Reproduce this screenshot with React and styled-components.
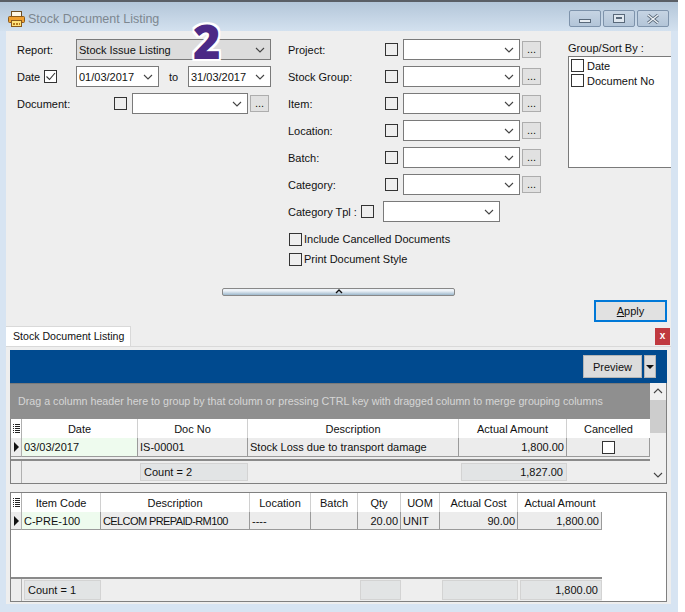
import React from "react";
import styled, { createGlobalStyle } from "styled-components";

const GlobalStyle = createGlobalStyle`
  html, body { margin: 0; padding: 0; background: #fff; }
  body { font-family: "Liberation Sans", Tahoma, sans-serif; font-size: 11px; color: #111; }
`;

const Chevron = () => (
  <svg width="10" height="6" viewBox="0 0 10 6">
    <polyline points="1,1 5,5 9,1" fill="none" stroke="#444" strokeWidth="1.1" />
  </svg>
);

const Tick = () => (
  <svg width="11" height="11" viewBox="0 0 11 11">
    <polyline points="1.5,5.5 4.5,8.5 10,2" fill="none" stroke="#333" strokeWidth="1.1" />
  </svg>
);

const PrinterIcon = () => (
  <svg width="17" height="16" viewBox="0 0 17 16">
    <rect x="3.5" y="0.5" width="10" height="6" fill="#fff8e6" stroke="#6f4e22" />
    <rect x="0.5" y="5.5" width="16" height="6" rx="1" fill="#f0a030" stroke="#8a5a1c" />
    <rect x="3.5" y="9.5" width="10" height="6" fill="#ffe27a" stroke="#8a5a1c" />
    <rect x="5" y="12" width="2" height="2" fill="#b5791f" />
    <rect x="8" y="12" width="2" height="2" fill="#b5791f" />
    <rect x="11" y="12" width="1" height="2" fill="#b5791f" />
  </svg>
);

const Page = styled.div`
  width: 685px;
  height: 612px;
  background: #fff;
  overflow: hidden;
  position: relative;
`;

const Win = styled.div`
  width: 678px;
  height: 612px;
  background: #d7e4f2;
  border-top: 2px solid #5a5f66;
  box-sizing: border-box;
  display: flex;
  flex-direction: column;
`;

const TitleBar = styled.div`
  height: 29px;
  flex: none;
  background: linear-gradient(#b3c6d9, #d3e1ef);
  display: flex;
  align-items: center;
  padding: 5px 9px 0 8px;
  box-sizing: border-box;
`;

const TitleText = styled.span`
  margin-left: 3px;
  font-size: 12.5px;
  color: #7d8790;
  flex: 1;
`;

const WinButtons = styled.div`
  display: flex;
  gap: 2px;
  margin-top: -1px;
`;

const WinButton = styled.div`
  width: 32px;
  height: 17px;
  box-sizing: border-box;
  border: 1px solid #7e93ab;
  border-radius: 2px;
  background: linear-gradient(#c6d4e3, #b3c5d8);
  display: flex;
  align-items: ${(p) => (p.$low ? "flex-end" : "center")};
  padding-bottom: ${(p) => (p.$low ? 3 : 0)}px;
  justify-content: center;
`;

const Client = styled.div`
  margin: 0 6px 0 6px;
  width: 665px;
  height: 573px;
  flex: none;
  background: #eeeeee;
  display: flex;
  flex-direction: column;
  overflow: hidden;
`;

const Badge = styled.div`
  position: absolute;
  left: 193px;
  top: 21px;
  font-family: "Open Sans", sans-serif;
  font-weight: 800;
  font-size: 47px;
  line-height: 40px;
  color: #4b2a86;
  text-shadow: -2px 0 #fff, 2px 0 #fff, 0 -2px #fff, 0 2px #fff, -2px -2px #fff, 2px 2px #fff, -2px 2px #fff, 2px -2px #fff;
`;

const FormArea = styled.div`
  display: grid;
  grid-template-columns: 271px 280px 1fr;
  padding: 8px 0 0 11px;
  height: 229px;
  box-sizing: border-box;
`;

const Column = styled.div`
  display: flex;
  flex-direction: column;
  gap: 6px;
`;

const Row = styled.div`
  display: flex;
  align-items: center;
  height: 21px;
  flex: none;
`;

const Label = styled.span`
  width: ${(p) => p.$w || 59}px;
  flex: none;
  white-space: nowrap;
`;

const Box = styled.div`
  width: 13px;
  height: 13px;
  flex: none;
  box-sizing: border-box;
  border: 1px solid #333;
  background: ${(p) => (p.$bg ? "#fff" : "transparent")};
  display: flex;
  align-items: center;
  justify-content: center;
`;

const Combo = styled.div`
  width: ${(p) => p.$w}px;
  height: 21px;
  flex: none;
  box-sizing: border-box;
  border: 1px solid #7a7a7a;
  background: ${(p) => (p.$grey ? "#dcdcdc" : "#fff")};
  display: flex;
  align-items: center;
  justify-content: space-between;
  padding: 0 5px 0 2px;
  margin-left: ${(p) => p.$ml || 0}px;
`;

const Dots = styled.div`
  width: 19px;
  height: 17px;
  flex: none;
  margin-left: 2px;
  box-sizing: border-box;
  border: 1px solid #adadad;
  background: #e1e1e1;
  text-align: center;
  line-height: 15px;
`;

const ToText = styled.span`
  width: 29px;
  text-align: center;
  flex: none;
`;

const CheckLine = styled.div`
  display: flex;
  align-items: center;
  height: 20px;
  margin-left: 1px;
  gap: 2px;
`;

const CheckList = styled.div`
  display: flex;
  flex-direction: column;
  margin-top: 1px;
`;

const GroupColumn = styled.div`
  padding-top: 1px;
`;

const GroupHead = styled.div`
  height: 16px;
  line-height: 16px;
`;

const GroupBox = styled.div`
  width: 110px;
  height: 112px;
  box-sizing: border-box;
  border: 1px solid #7a7a7a;
  background: #fff;
  padding: 2px 2px;
  display: flex;
  flex-direction: column;
  gap: 2px;
`;

const GroupItem = styled.div`
  display: flex;
  align-items: center;
  gap: 3px;
  height: 13px;
`;

const Splitter = styled.div`
  width: 233px;
  height: 8px;
  margin: 28px 0 0 216px;
  flex: none;
  box-sizing: border-box;
  border: 1px solid #888;
  border-radius: 2px;
  background: linear-gradient(#eef3f8 30%, #9db8cc);
  display: flex;
  justify-content: center;
  align-items: flex-start;
`;

const ApplyRow = styled.div`
  display: flex;
  justify-content: flex-end;
  padding: 4px 4px 0 0;
  flex: none;
`;

const ApplyButton = styled.div`
  width: 73px;
  height: 22px;
  box-sizing: border-box;
  border: 2px solid #0078d7;
  background: #e1e1e1;
  text-align: center;
  line-height: 18px;
  u { text-underline-offset: 1px; }
`;

const TabRow = styled.div`
  margin-top: 4px;
  height: 21px;
  flex: none;
  display: flex;
  justify-content: space-between;
  border-bottom: 1px solid #d9d9d9;
  box-sizing: border-box;
  padding-right: 1px;
`;

const Tab = styled.div`
  width: 125px;
  height: 20px;
  background: #fff;
  border: 1px solid #d9d9d9;
  border-width: 1px 1px 0 0;
  box-sizing: border-box;
  padding-left: 7px;
  line-height: 19px;
  font-size: 10.6px;
  white-space: nowrap;
`;

const CloseTab = styled.div`
  width: 15px;
  height: 17px;
  margin-top: 2px;
  background: #c0393f;
  color: #fff;
  font-weight: bold;
  font-size: 10px;
  text-align: center;
  line-height: 16px;
`;

const Content = styled.div`
  flex: 1;
  padding: 3px 4px;
  display: flex;
  flex-direction: column;
`;

const Toolbar = styled.div`
  height: 33px;
  flex: none;
  background: #004a8f;
  display: flex;
  align-items: center;
  justify-content: flex-end;
  padding-right: 11px;
  gap: 2px;
`;

const ToolButton = styled.div`
  width: ${(p) => p.$w}px;
  height: 23px;
  box-sizing: border-box;
  background: #dcdcdc;
  border: 1px solid #b5b5b5;
  display: flex;
  align-items: center;
  justify-content: center;
`;

const Caret = styled.div`
  width: 0;
  height: 0;
  border-left: 4px solid transparent;
  border-right: 4px solid transparent;
  border-top: 4px solid #111;
`;

const MasterGrid = styled.div`
  height: 100px;
  flex: none;
  display: flex;
  border: 1px solid #808080;
  border-width: 0 1px 1px 0;
`;

const MasterMain = styled.div`
  width: 640px;
  flex: none;
  display: flex;
  flex-direction: column;
  border-left: 1px solid #808080;
  box-sizing: border-box;
`;

const GroupPanel = styled.div`
  height: 36px;
  flex: none;
  margin-left: -1px;
  background: #8f8f8f;
  border-top: 1px solid #7a7a7a;
  box-sizing: border-box;
  color: #d6d6d6;
  padding-left: 8px;
  line-height: 35px;
  font-size: 10.7px;
  white-space: nowrap;
`;

const ScrollBar = styled.div`
  flex: 1;
  background: #f0f0f0;
  display: flex;
  flex-direction: column;
  align-items: center;
`;

const ScrollArrow = styled.div`
  height: 17px;
  flex: none;
  display: flex;
  align-items: center;
  justify-content: center;
  transform: ${(p) => (p.$up ? "rotate(180deg)" : "none")};
`;

const ScrollThumb = styled.div`
  width: 100%;
  height: 33px;
  background: #cdcdcd;
`;

const ScrollGap = styled.div`
  flex: 1;
`;

const Cols = styled.div`
  display: grid;
  grid-template-columns: ${(p) => p.$cols};
  width: ${(p) => p.$w || "auto"};
  height: ${(p) => p.$h}px;
  flex: none;
`;

const HeadCell = styled.div`
  text-align: center;
  line-height: 20px;
  background: #fff;
  border-right: 1px solid #d0d0d0;
  white-space: nowrap;
  overflow: hidden;
  &:last-child { border-right: 0; }
`;

const DataCell = styled.div`
  padding: 0 2px;
  line-height: 18px;
  background: ${(p) => (p.$focus ? "#eefbee" : "#ececec")};
  border-right: 1px solid #9a9a9a;
  border-bottom: 1px solid #9a9a9a;
  text-align: ${(p) => (p.$right ? "right" : "left")};
  letter-spacing: ${(p) => (p.$tight ? "-0.6px" : "normal")};
  white-space: nowrap;
  overflow: hidden;
  display: ${(p) => (p.$center ? "flex" : "block")};
  align-items: center;
  justify-content: center;
`;

const Indicator = styled.div`
  background: ${(p) => p.$bg || "#ececec"};
  border-right: 1px solid #b0b0b0;
  border-bottom: ${(p) => (p.$line ? "1px solid #9a9a9a" : "0")};
  display: flex;
  align-items: center;
  justify-content: center;
`;

const RowArrow = styled.div`
  width: 0;
  height: 0;
  border-top: 5px solid transparent;
  border-bottom: 5px solid transparent;
  border-left: 5px solid #111;
`;

const ColsIcon = () => (
  <svg width="7" height="10" viewBox="0 0 7 10">
    {[0, 2, 4, 6, 8].map((y) => (
      <rect key={y} x="0" y={y} width="7" height="1" fill="#222" />
    ))}
    <rect x="1" y="0" width="1" height="10" fill="#fff" />
  </svg>
);

const RowGap = styled.div`
  height: 4px;
  flex: none;
  border-bottom: 2px solid #8a8a8a;
  box-sizing: border-box;
`;

const FootCell = styled.div`
  padding: 0 3px;
  background: ${(p) => (p.$empty ? "transparent" : "#e2e4e5")};
  border: ${(p) => (p.$empty ? "0" : "1px solid #d3d3d3")};
  display: flex;
  align-items: center;
  justify-content: ${(p) => (p.$right ? "flex-end" : "flex-start")};
  white-space: nowrap;
  overflow: hidden;
`;

const Footer = styled.div`
  display: grid;
  grid-template-columns: ${(p) => p.$cols};
  height: ${(p) => p.$h}px;
  flex: none;
  background: #eeeeee;

  ${FootCell} {
    margin: ${(p) => p.$inset}px 0 ${(p) => p.$inset}px 2px;
  }
`;

const DetailGrid = styled.div`
  margin-top: 8px;
  height: 108px;
  flex: none;
  border: 1px solid #808080;
  background: #fff;
  display: flex;
  flex-direction: column;
`;

const DetailBody = styled.div`
  height: 47px;
  flex: none;
`;

const DetailFoot = styled.div`
  flex: 1;
  width: 591px;
  border-top: 2px solid #8a8a8a;
  background: #eeeeee;
`;

const masterCols = "11px 116px 110px 211px 108px 83px";
const detailCols = "11px 79px 149px 61px 47px 43px 39px 78px 84px";

const filters = ["Project:", "Stock Group:", "Item:", "Location:", "Batch:", "Category:"];

export default function App() {
  return (
    <Page>
      <GlobalStyle />
      <Win>
        <TitleBar>
          <PrinterIcon />
          <TitleText>Stock Document Listing</TitleText>
          <WinButtons>
            <WinButton $low>
              <svg width="12" height="4" viewBox="0 0 12 4" style={{ display: "block" }}><rect x="0.5" y="0.5" width="11" height="3" fill="#e6ecf2" stroke="#59697a" /></svg>
            </WinButton>
            <WinButton>
              <svg width="12" height="9" viewBox="0 0 12 9"><rect x="0.5" y="0.5" width="11" height="8" fill="#dfe7ef" stroke="#59697a" /><rect x="3" y="3" width="6" height="2" fill="#59697a" /></svg>
            </WinButton>
            <WinButton>
              <svg width="14" height="10" viewBox="0 0 14 10"><path d="M2 1 L12 9 M12 1 L2 9" stroke="#59697a" strokeWidth="3" /><path d="M2 1 L12 9 M12 1 L2 9" stroke="#eef2f6" strokeWidth="1.4" /></svg>
            </WinButton>
          </WinButtons>
        </TitleBar>
        <Client>
          <FormArea>
            <Column>
              <Row>
                <Label>Report:</Label>
                <Combo $w={195} $grey>Stock Issue Listing<Chevron /></Combo>
              </Row>
              <Row>
                <Label $w={27}>Date</Label>
                <Box $bg><Tick /></Box>
                <Combo $w={83} $ml={19}>01/03/2017<Chevron /></Combo>
                <ToText>to</ToText>
                <Combo $w={83}>31/03/2017<Chevron /></Combo>
              </Row>
              <Row>
                <Label $w={97}>Document:</Label>
                <Box />
                <Combo $w={116} $ml={5}><span /><Chevron /></Combo>
                <Dots>...</Dots>
              </Row>
            </Column>
            <Column>
              {filters.map((f) => (
                <Row key={f}>
                  <Label $w={97}>{f}</Label>
                  <Box />
                  <Combo $w={117} $ml={5}><span /><Chevron /></Combo>
                  <Dots>...</Dots>
                </Row>
              ))}
              <Row>
                <Label $w={73}>Category Tpl :</Label>
                <Box />
                <Combo $w={117} $ml={9}><span /><Chevron /></Combo>
              </Row>
              <CheckList>
                <CheckLine><Box />Include Cancelled Documents</CheckLine>
                <CheckLine><Box />Print Document Style</CheckLine>
              </CheckList>
            </Column>
            <GroupColumn>
              <GroupHead>Group/Sort By :</GroupHead>
              <GroupBox>
                <GroupItem><Box />Date</GroupItem>
                <GroupItem><Box />Document No</GroupItem>
              </GroupBox>
            </GroupColumn>
          </FormArea>
          <Splitter>
            <svg width="8" height="5" viewBox="0 0 8 5"><polyline points="1,4 4,1 7,4" fill="none" stroke="#111" strokeWidth="1.4" /></svg>
          </Splitter>
          <ApplyRow>
            <ApplyButton><u>A</u>pply</ApplyButton>
          </ApplyRow>
          <TabRow>
            <Tab>Stock Document Listing</Tab>
            <CloseTab>x</CloseTab>
          </TabRow>
          <Content>
            <Toolbar>
              <ToolButton $w={59}>Preview</ToolButton>
              <ToolButton $w={12}><Caret /></ToolButton>
            </Toolbar>
            <MasterGrid>
              <MasterMain>
                <GroupPanel>Drag a column header here to group by that column or pressing CTRL key with dragged column to merge grouping columns</GroupPanel>
                <Cols $cols={masterCols} $h={19}>
                  <Indicator $bg="#fff"><ColsIcon /></Indicator>
                  <HeadCell>Date</HeadCell>
                  <HeadCell>Doc No</HeadCell>
                  <HeadCell>Description</HeadCell>
                  <HeadCell>Actual Amount</HeadCell>
                  <HeadCell>Cancelled</HeadCell>
                </Cols>
                <Cols $cols={masterCols} $h={19}>
                  <Indicator $bg="#ececec" $line><RowArrow /></Indicator>
                  <DataCell $focus>03/03/2017</DataCell>
                  <DataCell>IS-00001</DataCell>
                  <DataCell>Stock Loss due to transport damage</DataCell>
                  <DataCell $right>1,800.00</DataCell>
                  <DataCell $center><Box $bg /></DataCell>
                </Cols>
                <RowGap />
                <Footer $cols={masterCols} $h={22} $inset={2}>
                  <Indicator $bg="#eeeeee" />
                  <FootCell $empty />
                  <FootCell>Count = 2</FootCell>
                  <FootCell $empty />
                  <FootCell $right>1,827.00</FootCell>
                  <FootCell $empty />
                </Footer>
              </MasterMain>
              <ScrollBar>
                <ScrollArrow $up><Chevron /></ScrollArrow>
                <ScrollThumb />
                <ScrollGap />
                <ScrollArrow><Chevron /></ScrollArrow>
              </ScrollBar>
            </MasterGrid>
            <DetailGrid>
              <Cols $cols={detailCols} $h={19} $w="591px">
                <Indicator $bg="#fff"><ColsIcon /></Indicator>
                <HeadCell>Item Code</HeadCell>
                <HeadCell>Description</HeadCell>
                <HeadCell>Location</HeadCell>
                <HeadCell>Batch</HeadCell>
                <HeadCell>Qty</HeadCell>
                <HeadCell>UOM</HeadCell>
                <HeadCell>Actual Cost</HeadCell>
                <HeadCell>Actual Amount</HeadCell>
              </Cols>
              <Cols $cols={detailCols} $h={18} $w="591px">
                <Indicator $bg="#ececec" $line><RowArrow /></Indicator>
                <DataCell $focus>C-PRE-100</DataCell>
                <DataCell $tight>CELCOM PREPAID-RM100</DataCell>
                <DataCell>----</DataCell>
                <DataCell />
                <DataCell $right>20.00</DataCell>
                <DataCell>UNIT</DataCell>
                <DataCell $right>90.00</DataCell>
                <DataCell $right>1,800.00</DataCell>
              </Cols>
              <DetailBody />
              <DetailFoot>
                <Footer $cols={detailCols} $h={22} $inset={1}>
                  <Indicator $bg="#eeeeee" />
                  <FootCell>Count = 1</FootCell>
                  <FootCell $empty />
                  <FootCell $empty />
                  <FootCell $empty />
                  <FootCell>&nbsp;</FootCell>
                  <FootCell $empty />
                  <FootCell>&nbsp;</FootCell>
                  <FootCell $right>1,800.00</FootCell>
                </Footer>
              </DetailFoot>
            </DetailGrid>
          </Content>
        </Client>
      </Win>
      <Badge>2</Badge>
    </Page>
  );
}
